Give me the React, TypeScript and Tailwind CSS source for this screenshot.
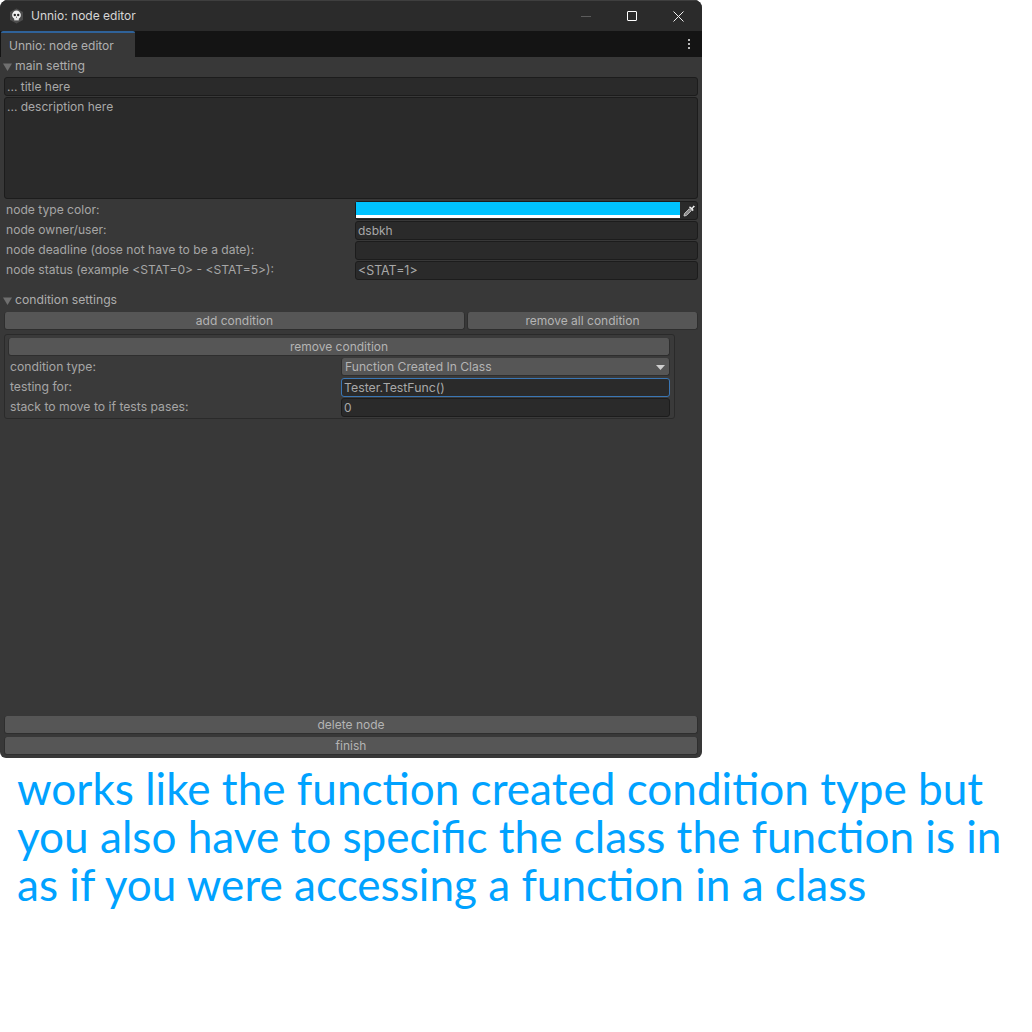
const inputClass =
  "h-[19px] bg-[#2a2a2a] border border-[#1c1c1c] rounded-[3px] px-[2px] text-[12px] leading-[17px] text-[#a8a8a8] overflow-hidden whitespace-nowrap";
const focusedInputClass =
  "h-[19px] bg-[#2a2a2a] border border-[#3a76b4] rounded-[3px] px-[2px] text-[12.3px] leading-[17px] text-[#a8a8a8] overflow-hidden whitespace-nowrap";
const buttonClass =
  "h-[18px] bg-[#565656] border border-t-0 border-[#2e2e2e] rounded-[3px] text-[12px] leading-[17px] text-[#b4b4b4] text-center whitespace-nowrap";

function Arrow() {
  return (
    <svg width="9" height="8" viewBox="0 0 9 8" className="shrink-0">
      <path d="M0 0.5H9L4.5 8Z" fill="#6f6f6f" />
    </svg>
  );
}

function Heading({ text }: { text: string }) {
  return (
    <div className="h-[19px] flex items-center gap-[3px] -ml-px text-[12.2px] text-[#adadad]">
      <Arrow />
      <span>{text}</span>
    </div>
  );
}

function Row({ label, children }: { label: string; children: React.ReactNode }) {
  return (
    <div className="flex h-[20px] items-center">
      <div className="w-[355px] pl-[6px] text-[12.1px] text-[#a6a6a6] whitespace-nowrap">{label}</div>
      <div className="w-[343px]">{children}</div>
    </div>
  );
}

function CondRow({ label, children }: { label: string; children: React.ReactNode }) {
  return (
    <div className="flex h-[20px] items-center">
      <div className="w-[334px] pl-[3px] text-[12.2px] text-[#a6a6a6] whitespace-nowrap">{label}</div>
      <div className="w-[329px]">{children}</div>
    </div>
  );
}

function Logo() {
  return (
    <svg width="15" height="16" viewBox="0 0 15 16">
      <path d="M7.5 0.5L14 4V12L7.5 15.5L1 12V4Z" fill="#4c4c4c" />
      <circle cx="7.5" cy="7" r="4.4" fill="#f2f2f2" />
      <rect x="5.2" y="10" width="4.6" height="2.4" fill="#e6e6e6" />
      <circle cx="5.8" cy="7" r="1.2" fill="#2a2a2a" />
      <circle cx="9.2" cy="7" r="1.2" fill="#2a2a2a" />
      <rect x="7.1" y="8.6" width="0.8" height="1.4" fill="#555555" />
    </svg>
  );
}

function Dropper() {
  return (
    <svg width="13" height="13" viewBox="0 0 13 13">
      <path d="M1 12L1.5 9.6L6.4 4.7L8.3 6.6L3.4 11.5Z" fill="#8a8a8a" stroke="#cfcfcf" strokeWidth="0.9" />
      <path d="M5.8 3L7.2 2.6L8.8 3.8L10.6 1.4L12 2.6L9.8 4.4L10.6 6L9.8 7.2Z" fill="#ececec" />
    </svg>
  );
}

export default function App() {
  return (
    <div className="w-[1032px] h-[1032px] bg-white overflow-hidden" style={{ fontFamily: "Inter, sans-serif" }}>
      <div className="w-[702px] h-[758px] flex flex-col bg-[#383838] rounded-t-[8px] rounded-b-[6px] overflow-hidden">
        <div className="h-[31px] shrink-0 flex items-center bg-[#2b2b2b] border-t border-[#3f3f3f]">
          <div className="w-[31px] flex justify-center pl-[2px]">
            <Logo />
          </div>
          <span className="text-[12px] text-[#d6d6d6]">Unnio: node editor</span>
          <div className="ml-auto pr-px flex items-center">
            <div className="w-[46px] flex justify-center">
              <div className="w-[10px] h-px bg-[#5c5c5c]" />
            </div>
            <div className="w-[46px] flex justify-center">
              <div className="w-[10px] h-[10px] border border-white rounded-[1px]" />
            </div>
            <div className="w-[46px] flex justify-center">
              <svg width="11" height="11" viewBox="0 0 11 11">
                <path d="M0.5 0.5L10.5 10.5M10.5 0.5L0.5 10.5" stroke="#f0f0f0" strokeWidth="1" />
              </svg>
            </div>
          </div>
        </div>

        <div className="h-[26px] shrink-0 flex bg-[#141414]">
          <div className="w-[134px] ml-px h-[26px] bg-[#383838] border-t-2 border-[#2f6299] rounded-t-[2px] pl-[8px] pt-[4px] text-[12px] leading-[17px] text-[#b0b0b0]">
            Unnio: node editor
          </div>
          <div className="ml-auto mr-[12px] flex flex-col justify-center gap-[2px]">
            <div className="w-[2px] h-[2px] bg-[#b8b8b8]" />
            <div className="w-[2px] h-[2px] bg-[#b8b8b8]" />
            <div className="w-[2px] h-[2px] bg-[#b8b8b8]" />
          </div>
        </div>

        <div className="flex-1 flex flex-col px-[4px] text-[12px]">
          <Heading text="main setting" />
          <div className="mt-px w-[694px] flex flex-col gap-px">
            <div className={inputClass}>... title here</div>
            <div className={`${inputClass} !h-[102px]`}>... description here</div>
          </div>

          <div className="-mx-[4px] mt-[1px] flex flex-col">
            <Row label="node type color:">
              <div className="h-[19px] flex items-center bg-[#2a2a2a] border border-[#1c1c1c] rounded-[3px]">
                <div className="w-[324px] h-[16px] flex flex-col">
                  <div className="h-[13px] bg-[#00c3ff]" />
                  <div className="h-[3px] bg-white" />
                </div>
                <div className="flex-1 flex justify-center pl-[2px]">
                  <Dropper />
                </div>
              </div>
            </Row>
            <Row label="node owner/user:">
              <div className={inputClass}>dsbkh</div>
            </Row>
            <Row label="node deadline (dose not have to be a date):">
              <div className={inputClass} />
            </Row>
            <Row label="node status (example <STAT=0> - <STAT=5>):">
              <div className={`${inputClass} !text-[12.4px]`}>&lt;STAT=1&gt;</div>
            </Row>
          </div>

          <div className="mt-[11px]">
            <Heading text="condition settings" />
          </div>
          <div className="mt-[2px] flex gap-[2px]">
            <div className={`${buttonClass} w-[461px]`}>add condition</div>
            <div className={`${buttonClass} w-[231px]`}>remove all condition</div>
          </div>

          <div className="mt-[4px] w-[671px] h-[85px] bg-[#3a3a3a] border border-[#2a2a2a] rounded-[3px] px-[3px] pt-[3px]">
            <div className={`${buttonClass} w-[662px]`}>remove condition</div>
            <div className="mt-[1px] flex flex-col -ml-px">
              <CondRow label="condition type:">
                <div className="h-[18px] bg-[#565656] border border-t-0 border-[#2e2e2e] rounded-[3px] pl-[3px] pr-[4px] pt-px flex items-center justify-between text-[12.1px] text-[#b4b4b4]">
                  <span>Function Created In Class</span>
                  <svg width="9" height="5" viewBox="0 0 9 5">
                    <path d="M0 0H9L4.5 5Z" fill="#cfcfcf" />
                  </svg>
                </div>
              </CondRow>
              <CondRow label="testing for:">
                <div className={focusedInputClass}>Tester.TestFunc()</div>
              </CondRow>
              <CondRow label="stack to move to if tests pases:">
                <div className={inputClass}>0</div>
              </CondRow>
            </div>
          </div>

          <div className="mt-auto mb-[3px] w-[694px] flex flex-col gap-[3px]">
            <div className={buttonClass}>delete node</div>
            <div className={buttonClass}>finish</div>
          </div>
        </div>
      </div>

      <div
        className="pl-[17px] pt-[6px] text-[44.1px] leading-[48px] text-[#00a2ff] whitespace-nowrap"
        style={{ fontFamily: "Lato, sans-serif" }}
      >
        <div>works like the function created condition type but</div>
        <div>you also have to specific the class the function is in</div>
        <div>as if you were accessing a function in a class</div>
      </div>
    </div>
  );
}
